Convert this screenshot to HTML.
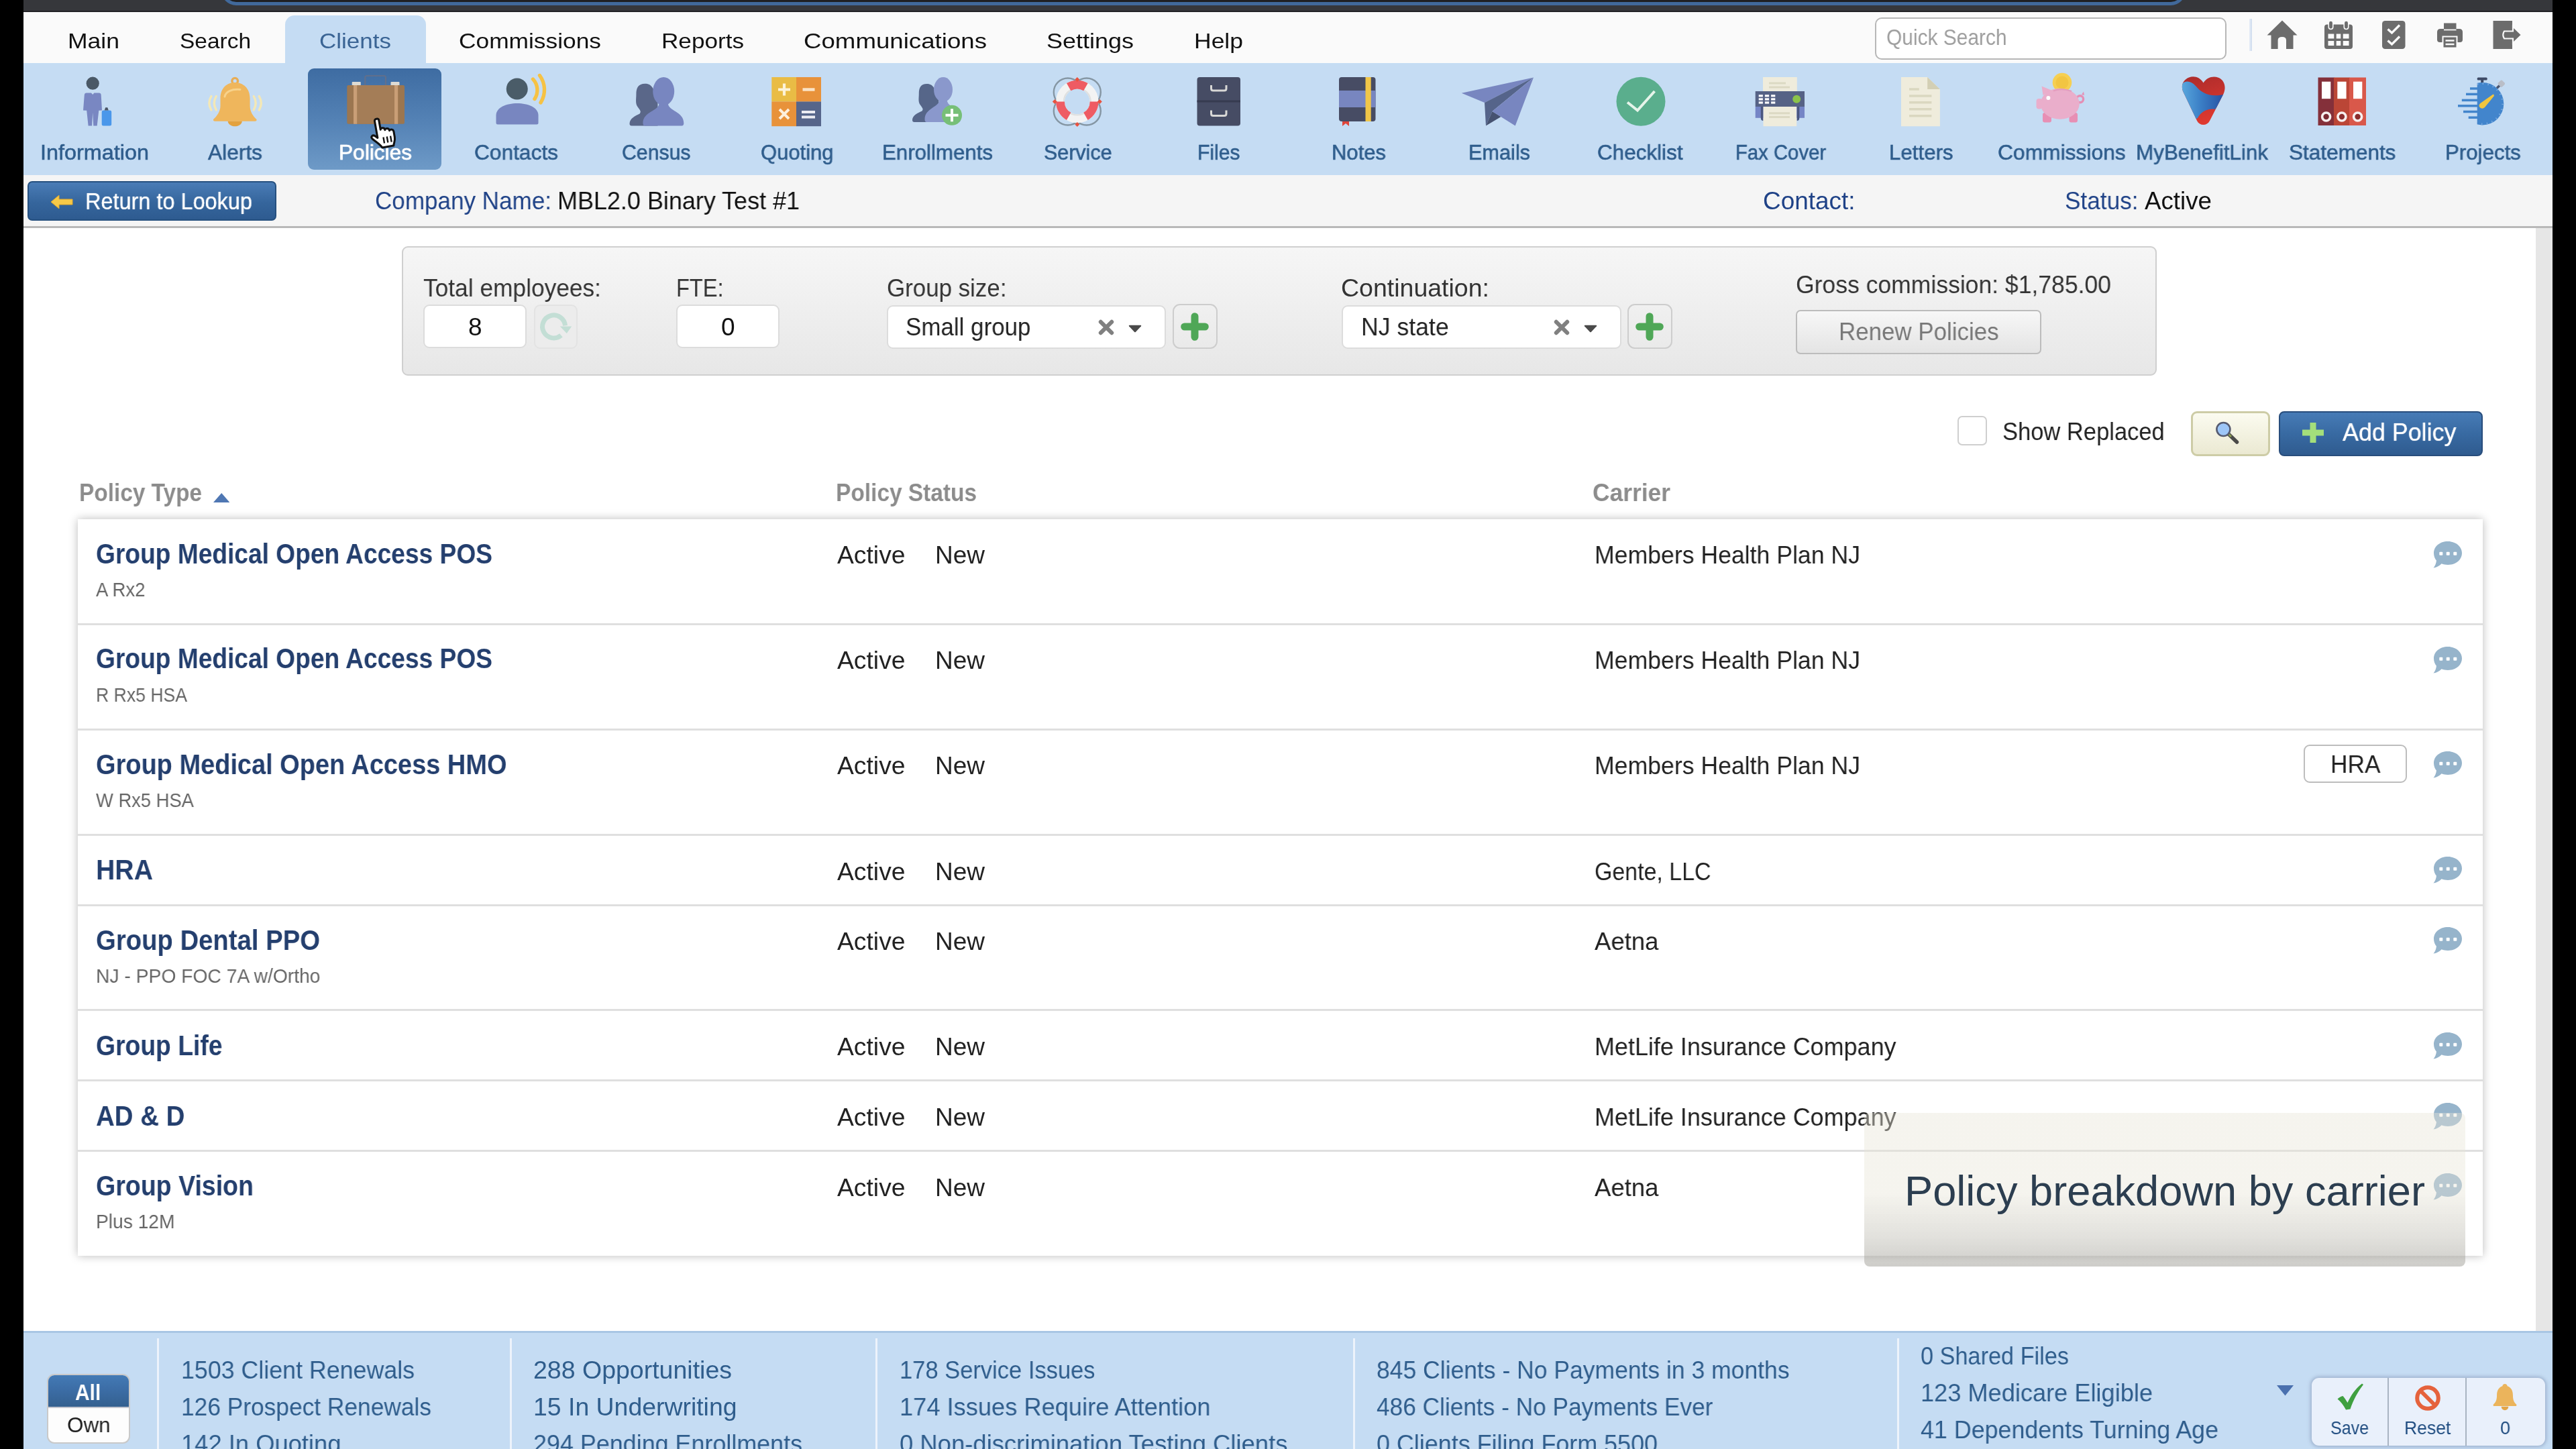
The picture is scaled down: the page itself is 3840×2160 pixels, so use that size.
<!DOCTYPE html>
<html lang="en"><head><meta charset="utf-8"><title>Policies - MBL2.0 Binary Test #1</title>
<style>
html,body{margin:0;padding:0;background:#000;}
body{width:3840px;height:2160px;overflow:hidden;position:relative;font-family:"Liberation Sans",sans-serif;}
#app{position:absolute;left:0;top:0;width:3840px;height:2160px;overflow:hidden;background:#000;}
#app div,#app span.t,#app svg{position:absolute;box-sizing:border-box;}
span.t{white-space:pre;line-height:1em;transform-origin:0 50%;display:block;will-change:transform;}
</style></head><body><div id="app"><div style="left:35px;top:0px;width:3770px;height:2160px;background:#fff;"></div>
<div style="left:35px;top:0px;width:3770px;height:18px;background:#36373b;border-bottom:2px solid #232326;"></div>
<div style="left:330px;top:-40px;width:2928px;height:48px;background:#1f2023;border:5.600px solid #41699b;border-radius:22px;"></div>
<div style="left:35px;top:18px;width:3770px;height:76px;background:#fafafa;"></div>
<div style="left:425px;top:23px;width:210px;height:75px;background:#c5dcf3;border-radius:14px 14px 0 0;"></div>
<div style="left:35px;top:94px;width:3770px;height:167px;background:#c5dcf3;"></div>
<div style="left:35px;top:261px;width:3770px;height:79px;background:#f5f5f5;border-bottom:3px solid #b9b9b9;"></div>
<div style="left:3779.5px;top:340px;width:25.5px;height:1644px;background:#e6e6e6;"></div>
<span class="t" style="left:101.0px;top:45.9px;font-size:31.8px;color:#111;transform:scaleX(1.1172);">Main</span>
<span class="t" style="left:268.0px;top:45.9px;font-size:31.8px;color:#111;transform:scaleX(1.0521);">Search</span>
<span class="t" style="left:476.0px;top:45.9px;font-size:31.8px;color:#3a6494;transform:scaleX(1.1008);">Clients</span>
<span class="t" style="left:684.0px;top:45.9px;font-size:31.8px;color:#111;transform:scaleX(1.1110);">Commissions</span>
<span class="t" style="left:986.0px;top:45.9px;font-size:31.8px;color:#111;transform:scaleX(1.1047);">Reports</span>
<span class="t" style="left:1198.0px;top:45.9px;font-size:31.8px;color:#111;transform:scaleX(1.1528);">Communications</span>
<span class="t" style="left:1560.0px;top:45.9px;font-size:31.8px;color:#111;transform:scaleX(1.1314);">Settings</span>
<span class="t" style="left:1780.0px;top:45.9px;font-size:31.8px;color:#111;transform:scaleX(1.1161);">Help</span>
<div style="left:2794.5px;top:26px;width:524px;height:63px;background:#fff;border:2.800px solid #b7b7b7;border-radius:10px;"></div>
<span class="t" style="left:2812.0px;top:39.4px;font-size:33.5px;color:#9f9f9f;transform:scaleX(0.8926);">Quick Search</span>
<div style="left:3353px;top:28px;width:3.5px;height:48px;background:linear-gradient(90deg,#e6edf7,#cfdcee);"></div>
<div style="left:459px;top:102px;width:199px;height:151px;background:linear-gradient(180deg,#3e6ca2 0%,#5583b6 55%,#6e9ac7 100%);border-radius:9px;"></div>
<span class="t" style="left:59.9px;top:210.9px;font-size:32px;color:#2f5d8c;transform:scaleX(1.0120);-webkit-text-stroke:.6px #2f5d8c;">Information</span>
<span class="t" style="left:309.9px;top:210.9px;font-size:32px;color:#2f5d8c;transform:scaleX(0.9903);-webkit-text-stroke:.6px #2f5d8c;">Alerts</span>
<span class="t" style="left:505.3px;top:210.9px;font-size:32px;color:#fff;transform:scaleX(0.9885);text-shadow:0 0 1px #fff;-webkit-text-stroke:.5px #fff;">Policies</span>
<span class="t" style="left:706.7px;top:210.9px;font-size:32px;color:#2f5d8c;transform:scaleX(0.9899);-webkit-text-stroke:.6px #2f5d8c;">Contacts</span>
<span class="t" style="left:927.4px;top:210.9px;font-size:32px;color:#2f5d8c;transform:scaleX(0.9447);-webkit-text-stroke:.6px #2f5d8c;">Census</span>
<span class="t" style="left:1133.9px;top:210.9px;font-size:32px;color:#2f5d8c;transform:scaleX(0.9681);-webkit-text-stroke:.6px #2f5d8c;">Quoting</span>
<span class="t" style="left:1315.1px;top:210.9px;font-size:32px;color:#2f5d8c;transform:scaleX(0.9766);-webkit-text-stroke:.6px #2f5d8c;">Enrollments</span>
<span class="t" style="left:1556.2px;top:210.9px;font-size:32px;color:#2f5d8c;transform:scaleX(0.9512);-webkit-text-stroke:.6px #2f5d8c;">Service</span>
<span class="t" style="left:1784.7px;top:210.9px;font-size:32px;color:#2f5d8c;transform:scaleX(0.9399);-webkit-text-stroke:.6px #2f5d8c;">Files</span>
<span class="t" style="left:1985.4px;top:210.9px;font-size:32px;color:#2f5d8c;transform:scaleX(0.9690);-webkit-text-stroke:.6px #2f5d8c;">Notes</span>
<span class="t" style="left:2189.3px;top:210.9px;font-size:32px;color:#2f5d8c;transform:scaleX(0.9582);-webkit-text-stroke:.6px #2f5d8c;">Emails</span>
<span class="t" style="left:2381.0px;top:210.9px;font-size:32px;color:#2f5d8c;transform:scaleX(0.9822);-webkit-text-stroke:.6px #2f5d8c;">Checklist</span>
<span class="t" style="left:2586.7px;top:210.9px;font-size:32px;color:#2f5d8c;transform:scaleX(0.9147);-webkit-text-stroke:.6px #2f5d8c;">Fax Cover</span>
<span class="t" style="left:2815.8px;top:210.9px;font-size:32px;color:#2f5d8c;transform:scaleX(0.9772);-webkit-text-stroke:.6px #2f5d8c;">Letters</span>
<span class="t" style="left:2977.7px;top:210.9px;font-size:32px;color:#2f5d8c;transform:scaleX(0.9931);-webkit-text-stroke:.6px #2f5d8c;">Commissions</span>
<span class="t" style="left:3184.0px;top:210.9px;font-size:32px;color:#2f5d8c;transform:scaleX(0.9802);-webkit-text-stroke:.6px #2f5d8c;">MyBenefitLink</span>
<span class="t" style="left:3412.3px;top:210.9px;font-size:32px;color:#2f5d8c;transform:scaleX(0.9848);-webkit-text-stroke:.6px #2f5d8c;">Statements</span>
<span class="t" style="left:3645.0px;top:210.9px;font-size:32px;color:#2f5d8c;transform:scaleX(0.9758);-webkit-text-stroke:.6px #2f5d8c;">Projects</span>
<div style="left:41px;top:270px;width:371px;height:59px;background:linear-gradient(180deg,#4a7cb6,#35659c 55%,#2e5b90);border:2px solid #26507f;border-radius:7px;"></div>
<span class="t" style="left:127.0px;top:282.4px;font-size:35px;color:#fff;transform:scaleX(0.9273);text-shadow:0 0 1px #fff;">Return to Lookup</span>
<svg style="left:74px;top:288px;" width="38" height="26" viewBox="0 0 38 26"><path d="M2 13 L14 3 L14 9 L34 9 L34 17 L14 17 L14 23 Z" fill="#f7c948" stroke="#e0a82a" stroke-width="1"/></svg>
<span class="t" style="left:559.0px;top:282.1px;font-size:36.5px;color:#1f4287;transform:scaleX(0.9603);">Company Name:</span>
<span class="t" style="left:831.0px;top:282.1px;font-size:36.5px;color:#111;transform:scaleX(0.9848);">MBL2.0 Binary Test #1</span>
<span class="t" style="left:2627.5px;top:282.1px;font-size:36.5px;color:#1f4287;transform:scaleX(1.0115);">Contact:</span>
<span class="t" style="left:3077.5px;top:282.1px;font-size:36.5px;color:#1f4287;transform:scaleX(0.9637);">Status:</span>
<span class="t" style="left:3196.7px;top:282.1px;font-size:36.5px;color:#111;transform:scaleX(1.0060);">Active</span>
<div style="left:599px;top:367px;width:2616px;height:193px;background:linear-gradient(180deg,#f6f6f6,#e7e7e7);border:2px solid #cfcfcf;border-radius:9px;"></div>
<span class="t" style="left:631.0px;top:411.2px;font-size:37px;color:#333;transform:scaleX(0.9544);">Total employees:</span>
<span class="t" style="left:1008.0px;top:411.2px;font-size:37px;color:#333;transform:scaleX(0.8794);">FTE:</span>
<span class="t" style="left:1321.5px;top:411.2px;font-size:37px;color:#333;transform:scaleX(0.9434);">Group size:</span>
<span class="t" style="left:1999.0px;top:411.2px;font-size:37px;color:#333;transform:scaleX(1.0135);">Continuation:</span>
<span class="t" style="left:2677.0px;top:405.7px;font-size:37px;color:#333;transform:scaleX(0.9603);">Gross commission: $1,785.00</span>
<div style="left:631px;top:454px;width:154px;height:65px;background:#fff;border:2px solid #dcdcdc;border-radius:9px;"></div>
<span class="t" style="left:697.7px;top:468.7px;font-size:37px;color:#111;">8</span>
<div style="left:796px;top:454px;width:65px;height:65.5px;background:#ececec;border:2px solid #e3e3e3;border-radius:9px;"></div>
<svg style="left:796px;top:454px;" width="66" height="66" viewBox="0 0 66 66"><path d="M40.5 45.9 A17 17 0 1 1 46.5 31.4" fill="none" stroke="#c3ded5" stroke-width="7"/><path d="M38.8 32.6 L56.2 32.6 L48.8 43 Z" fill="#c3ded5"/></svg>
<div style="left:1008px;top:454px;width:154px;height:65px;background:#fff;border:2px solid #dcdcdc;border-radius:9px;"></div>
<span class="t" style="left:1074.7px;top:468.7px;font-size:37px;color:#111;">0</span>
<div style="left:1321.5px;top:454.5px;width:416.5px;height:65px;background:#fff;border:2px solid #dcdcdc;border-radius:9px;"></div>
<span class="t" style="left:1350.0px;top:468.7px;font-size:37px;color:#222;transform:scaleX(0.9446);">Small group</span>
<svg style="left:1636.2px;top:474.8px;" width="26" height="26" viewBox="0 0 26 26"><path d="M4.800 4.800 L21.200 21.200 M21.200 4.800 L4.800 21.200" stroke="#808080" stroke-width="6" stroke-linecap="round"/></svg>
<svg style="left:1682.2px;top:483.800px;" width="20" height="12" viewBox="0 0 20 12"><path d="M1.500 0.800 L18.500 0.800 Q19.800 1.200 19 2.300 L10.800 11 Q10 11.600 9.200 11 L1 2.300 Q0.200 1.200 1.500 0.800 Z" fill="#4a4a4a"/></svg>
<div style="left:2000px;top:454.5px;width:416.5px;height:65px;background:#fff;border:2px solid #dcdcdc;border-radius:9px;"></div>
<span class="t" style="left:2028.5px;top:468.7px;font-size:37px;color:#222;transform:scaleX(0.9630);">NJ state</span>
<svg style="left:2314.7px;top:474.8px;" width="26" height="26" viewBox="0 0 26 26"><path d="M4.800 4.800 L21.200 21.200 M21.200 4.800 L4.800 21.200" stroke="#808080" stroke-width="6" stroke-linecap="round"/></svg>
<svg style="left:2360.7px;top:483.800px;" width="20" height="12" viewBox="0 0 20 12"><path d="M1.500 0.800 L18.500 0.800 Q19.800 1.200 19 2.300 L10.800 11 Q10 11.600 9.200 11 L1 2.300 Q0.200 1.200 1.500 0.800 Z" fill="#4a4a4a"/></svg>
<div style="left:1747.8px;top:453px;width:67px;height:67px;background:linear-gradient(180deg,#f0f0f0,#eaeaea);border:2.500px solid #cdcdcd;border-radius:11px;"></div>
<svg style="left:1758.3px;top:463.5px;" width="46" height="46" viewBox="0 0 46 46"><path d="M23 7.700 V38.300 M7.700 23 H38.300" stroke="#4fa757" stroke-width="11" stroke-linecap="round"/></svg>
<div style="left:2425.5px;top:453px;width:67px;height:67px;background:linear-gradient(180deg,#f0f0f0,#eaeaea);border:2.500px solid #cdcdcd;border-radius:11px;"></div>
<svg style="left:2436px;top:463.5px;" width="46" height="46" viewBox="0 0 46 46"><path d="M23 7.700 V38.300 M7.700 23 H38.300" stroke="#4fa757" stroke-width="11" stroke-linecap="round"/></svg>
<div style="left:2677px;top:462px;width:366px;height:66px;background:linear-gradient(180deg,#f7f7f7,#e4e4e4);border:2px solid #bcbcbc;border-radius:7px;"></div>
<span class="t" style="left:2741.0px;top:476.5px;font-size:36px;color:#777;transform:scaleX(0.9698);">Renew Policies</span>
<div style="left:2918px;top:620px;width:44px;height:44px;background:#fff;border:2px solid #cfcfcf;border-radius:7px;"></div>
<span class="t" style="left:2985.0px;top:625.4px;font-size:37px;color:#222;transform:scaleX(0.9326);">Show Replaced</span>
<div style="left:3266px;top:612.5px;width:117.5px;height:67.5px;background:linear-gradient(180deg,#fbfbf0,#ebe9d2);border:3px solid #cdcca6;border-radius:9px;"></div>
<svg style="left:3298px;top:624px;" width="44" height="44" viewBox="0 0 44 44"><path d="M24 23 L36.5 35" stroke="#4a4a48" stroke-width="5.5" stroke-linecap="round"/><path d="M22 21 L28 27" stroke="#8a9a50" stroke-width="3"/><circle cx="16.4" cy="16" r="10" fill="#9dc6f7" stroke="#565b70" stroke-width="2.6"/></svg>
<div style="left:3397px;top:612.5px;width:304px;height:67.5px;background:linear-gradient(180deg,#477bb6,#386aa2 50%,#2f5b8f);border:2px solid #284d7c;border-radius:8px;"></div>
<svg style="left:3432px;top:630px;" width="32" height="30" viewBox="0 0 32 30"><path d="M11.5 0 H20.5 V10.5 H32 V19.5 H20.5 V30 H11.5 V19.5 H0 V10.5 H11.5 Z" fill="#a4df7b"/></svg>
<span class="t" style="left:3491.5px;top:625.7px;font-size:37px;color:#fff;transform:scaleX(0.9696);text-shadow:0 0 1px #fff;">Add Policy</span>
<span class="t" style="left:118.0px;top:716.4px;font-size:37.3px;color:#8c8c8c;font-weight:700;transform:scaleX(0.8948);">Policy Type</span>
<svg style="left:317.5px;top:734.5px;" width="24.500" height="14" viewBox="0 0 24 13" preserveAspectRatio="none"><path d="M0 13 L12 0 L24 13 Z" fill="#4f77b3"/></svg>
<span class="t" style="left:1246.0px;top:716.4px;font-size:37.3px;color:#8c8c8c;font-weight:700;transform:scaleX(0.8966);">Policy Status</span>
<span class="t" style="left:2374.0px;top:716.4px;font-size:37.3px;color:#8c8c8c;font-weight:700;transform:scaleX(0.9483);">Carrier</span>
<div style="left:116px;top:774.3px;width:3585px;height:1098px;background:#fff;box-shadow:0 0 13px 0 rgba(0,0,0,.27);"></div>
<span class="t" style="left:143.0px;top:804.5px;font-size:42px;color:#243f6e;font-weight:700;transform:scaleX(0.8843);">Group Medical Open Access POS</span>
<span class="t" style="left:142.5px;top:865.2px;font-size:29px;color:#666;transform:scaleX(0.9499);">A Rx2</span>
<span class="t" style="left:1247.5px;top:809.0px;font-size:37px;color:#222;transform:scaleX(1.0073);">Active</span>
<span class="t" style="left:1393.5px;top:809.0px;font-size:37px;color:#222;">New</span>
<span class="t" style="left:2376.5px;top:809.0px;font-size:37px;color:#222;transform:scaleX(0.9629);">Members Health Plan NJ</span>
<svg style="left:3625px;top:806px;" width="46" height="42" viewBox="0 0 46 42"><path d="M24 1 C36 1 45 8.6 45 18.5 C45 28.4 36 36 24 36 C20.6 36 17.4 35.4 14.6 34.3 C11.5 37.5 7.5 39.8 2.5 40.6 C5.2 37.4 6.6 33.6 6.9 29.6 C4.4 26.5 3 22.7 3 18.5 C3 8.6 12 1 24 1 Z" fill="#96b4cb"/><rect x="11.3" y="16.8" width="5" height="5" rx="1" fill="#fff"/><rect x="21.7" y="16.8" width="5" height="5" rx="1" fill="#fff"/><rect x="32.3" y="16.8" width="5" height="5" rx="1" fill="#fff"/></svg>
<div style="left:116px;top:929.2px;width:3585px;height:3px;background:#dfdfdf;"></div>
<span class="t" style="left:143.0px;top:961.2px;font-size:42px;color:#243f6e;font-weight:700;transform:scaleX(0.8843);">Group Medical Open Access POS</span>
<span class="t" style="left:142.5px;top:1021.9px;font-size:29px;color:#666;transform:scaleX(0.9173);">R Rx5 HSA</span>
<span class="t" style="left:1247.5px;top:965.7px;font-size:37px;color:#222;transform:scaleX(1.0073);">Active</span>
<span class="t" style="left:1393.5px;top:965.7px;font-size:37px;color:#222;">New</span>
<span class="t" style="left:2376.5px;top:965.7px;font-size:37px;color:#222;transform:scaleX(0.9629);">Members Health Plan NJ</span>
<svg style="left:3625px;top:962.7px;" width="46" height="42" viewBox="0 0 46 42"><path d="M24 1 C36 1 45 8.6 45 18.5 C45 28.4 36 36 24 36 C20.6 36 17.4 35.4 14.6 34.3 C11.5 37.5 7.5 39.8 2.5 40.6 C5.2 37.4 6.6 33.6 6.9 29.6 C4.4 26.5 3 22.7 3 18.5 C3 8.6 12 1 24 1 Z" fill="#96b4cb"/><rect x="11.3" y="16.8" width="5" height="5" rx="1" fill="#fff"/><rect x="21.7" y="16.8" width="5" height="5" rx="1" fill="#fff"/><rect x="32.3" y="16.8" width="5" height="5" rx="1" fill="#fff"/></svg>
<div style="left:116px;top:1085.9px;width:3585px;height:3px;background:#dfdfdf;"></div>
<span class="t" style="left:143.0px;top:1118.6px;font-size:42px;color:#243f6e;font-weight:700;transform:scaleX(0.9039);">Group Medical Open Access HMO</span>
<span class="t" style="left:142.5px;top:1178.9px;font-size:29px;color:#666;transform:scaleX(0.9438);">W Rx5 HSA</span>
<span class="t" style="left:1247.5px;top:1123.1px;font-size:37px;color:#222;transform:scaleX(1.0073);">Active</span>
<span class="t" style="left:1393.5px;top:1123.1px;font-size:37px;color:#222;">New</span>
<span class="t" style="left:2376.5px;top:1123.1px;font-size:37px;color:#222;transform:scaleX(0.9629);">Members Health Plan NJ</span>
<svg style="left:3625px;top:1119.4px;" width="46" height="42" viewBox="0 0 46 42"><path d="M24 1 C36 1 45 8.6 45 18.5 C45 28.4 36 36 24 36 C20.6 36 17.4 35.4 14.6 34.3 C11.5 37.5 7.5 39.8 2.5 40.6 C5.2 37.4 6.6 33.6 6.9 29.6 C4.4 26.5 3 22.7 3 18.5 C3 8.6 12 1 24 1 Z" fill="#96b4cb"/><rect x="11.3" y="16.8" width="5" height="5" rx="1" fill="#fff"/><rect x="21.7" y="16.8" width="5" height="5" rx="1" fill="#fff"/><rect x="32.3" y="16.8" width="5" height="5" rx="1" fill="#fff"/></svg>
<div style="left:3434px;top:1110.4px;width:154px;height:56.5px;background:#fff;border:2px solid #bdbdbd;border-radius:9px;"></div>
<span class="t" style="left:3474.0px;top:1121.1px;font-size:37px;color:#222;transform:scaleX(0.9536);">HRA</span>
<div style="left:116px;top:1242.6px;width:3585px;height:3px;background:#dfdfdf;"></div>
<span class="t" style="left:143.0px;top:1276.0px;font-size:42px;color:#243f6e;font-weight:700;transform:scaleX(0.9341);">HRA</span>
<span class="t" style="left:1247.5px;top:1280.5px;font-size:37px;color:#222;transform:scaleX(1.0073);">Active</span>
<span class="t" style="left:1393.5px;top:1280.5px;font-size:37px;color:#222;">New</span>
<span class="t" style="left:2376.5px;top:1280.5px;font-size:37px;color:#222;transform:scaleX(0.9169);">Gente, LLC</span>
<svg style="left:3625px;top:1276.1px;" width="46" height="42" viewBox="0 0 46 42"><path d="M24 1 C36 1 45 8.6 45 18.5 C45 28.4 36 36 24 36 C20.6 36 17.4 35.4 14.6 34.3 C11.5 37.5 7.5 39.8 2.5 40.6 C5.2 37.4 6.6 33.6 6.9 29.6 C4.4 26.5 3 22.7 3 18.5 C3 8.6 12 1 24 1 Z" fill="#96b4cb"/><rect x="11.3" y="16.8" width="5" height="5" rx="1" fill="#fff"/><rect x="21.7" y="16.8" width="5" height="5" rx="1" fill="#fff"/><rect x="32.3" y="16.8" width="5" height="5" rx="1" fill="#fff"/></svg>
<div style="left:116px;top:1347.5px;width:3585px;height:3px;background:#dfdfdf;"></div>
<span class="t" style="left:143.0px;top:1380.9px;font-size:42px;color:#243f6e;font-weight:700;transform:scaleX(0.9116);">Group Dental PPO</span>
<span class="t" style="left:142.5px;top:1440.9px;font-size:29px;color:#666;transform:scaleX(0.9745);">NJ - PPO FOC 7A w/Ortho</span>
<span class="t" style="left:1247.5px;top:1385.4px;font-size:37px;color:#222;transform:scaleX(1.0073);">Active</span>
<span class="t" style="left:1393.5px;top:1385.4px;font-size:37px;color:#222;">New</span>
<span class="t" style="left:2376.5px;top:1385.4px;font-size:37px;color:#222;transform:scaleX(0.9876);">Aetna</span>
<svg style="left:3625px;top:1381px;" width="46" height="42" viewBox="0 0 46 42"><path d="M24 1 C36 1 45 8.6 45 18.5 C45 28.4 36 36 24 36 C20.6 36 17.4 35.4 14.6 34.3 C11.5 37.5 7.5 39.8 2.5 40.6 C5.2 37.4 6.6 33.6 6.9 29.6 C4.4 26.5 3 22.7 3 18.5 C3 8.6 12 1 24 1 Z" fill="#96b4cb"/><rect x="11.3" y="16.8" width="5" height="5" rx="1" fill="#fff"/><rect x="21.7" y="16.8" width="5" height="5" rx="1" fill="#fff"/><rect x="32.3" y="16.8" width="5" height="5" rx="1" fill="#fff"/></svg>
<div style="left:116px;top:1504.2px;width:3585px;height:3px;background:#dfdfdf;"></div>
<span class="t" style="left:143.0px;top:1537.6px;font-size:42px;color:#243f6e;font-weight:700;transform:scaleX(0.8878);">Group Life</span>
<span class="t" style="left:1247.5px;top:1542.1px;font-size:37px;color:#222;transform:scaleX(1.0073);">Active</span>
<span class="t" style="left:1393.5px;top:1542.1px;font-size:37px;color:#222;">New</span>
<span class="t" style="left:2376.5px;top:1542.1px;font-size:37px;color:#222;transform:scaleX(0.9714);">MetLife Insurance Company</span>
<svg style="left:3625px;top:1537.7px;" width="46" height="42" viewBox="0 0 46 42"><path d="M24 1 C36 1 45 8.6 45 18.5 C45 28.4 36 36 24 36 C20.6 36 17.4 35.4 14.6 34.3 C11.5 37.5 7.5 39.8 2.5 40.6 C5.2 37.4 6.6 33.6 6.9 29.6 C4.4 26.5 3 22.7 3 18.5 C3 8.6 12 1 24 1 Z" fill="#96b4cb"/><rect x="11.3" y="16.8" width="5" height="5" rx="1" fill="#fff"/><rect x="21.7" y="16.8" width="5" height="5" rx="1" fill="#fff"/><rect x="32.3" y="16.8" width="5" height="5" rx="1" fill="#fff"/></svg>
<div style="left:116px;top:1609.1px;width:3585px;height:3px;background:#dfdfdf;"></div>
<span class="t" style="left:143.0px;top:1642.5px;font-size:42px;color:#243f6e;font-weight:700;transform:scaleX(0.9159);">AD &amp; D</span>
<span class="t" style="left:1247.5px;top:1647.0px;font-size:37px;color:#222;transform:scaleX(1.0073);">Active</span>
<span class="t" style="left:1393.5px;top:1647.0px;font-size:37px;color:#222;">New</span>
<span class="t" style="left:2376.5px;top:1647.0px;font-size:37px;color:#222;transform:scaleX(0.9714);">MetLife Insurance Company</span>
<svg style="left:3625px;top:1642.6px;" width="46" height="42" viewBox="0 0 46 42"><path d="M24 1 C36 1 45 8.6 45 18.5 C45 28.4 36 36 24 36 C20.6 36 17.4 35.4 14.6 34.3 C11.5 37.5 7.5 39.8 2.5 40.6 C5.2 37.4 6.6 33.6 6.9 29.6 C4.4 26.5 3 22.7 3 18.5 C3 8.6 12 1 24 1 Z" fill="#96b4cb"/><rect x="11.3" y="16.8" width="5" height="5" rx="1" fill="#fff"/><rect x="21.7" y="16.8" width="5" height="5" rx="1" fill="#fff"/><rect x="32.3" y="16.8" width="5" height="5" rx="1" fill="#fff"/></svg>
<div style="left:116px;top:1714px;width:3585px;height:3px;background:#dfdfdf;"></div>
<span class="t" style="left:143.0px;top:1747.4px;font-size:42px;color:#243f6e;font-weight:700;transform:scaleX(0.8938);">Group Vision</span>
<span class="t" style="left:142.5px;top:1807.4px;font-size:29px;color:#666;transform:scaleX(0.9720);">Plus 12M</span>
<span class="t" style="left:1247.5px;top:1751.9px;font-size:37px;color:#222;transform:scaleX(1.0073);">Active</span>
<span class="t" style="left:1393.5px;top:1751.9px;font-size:37px;color:#222;">New</span>
<span class="t" style="left:2376.5px;top:1751.9px;font-size:37px;color:#222;transform:scaleX(0.9876);">Aetna</span>
<svg style="left:3625px;top:1747.5px;" width="46" height="42" viewBox="0 0 46 42"><path d="M24 1 C36 1 45 8.6 45 18.5 C45 28.4 36 36 24 36 C20.6 36 17.4 35.4 14.6 34.3 C11.5 37.5 7.5 39.8 2.5 40.6 C5.2 37.4 6.6 33.6 6.9 29.6 C4.4 26.5 3 22.7 3 18.5 C3 8.6 12 1 24 1 Z" fill="#96b4cb"/><rect x="11.3" y="16.8" width="5" height="5" rx="1" fill="#fff"/><rect x="21.7" y="16.8" width="5" height="5" rx="1" fill="#fff"/><rect x="32.3" y="16.8" width="5" height="5" rx="1" fill="#fff"/></svg>
<div style="left:35px;top:1984px;width:3770px;height:176px;background:#c5dcf3;border-top:3px solid #a9c6e4;"></div>
<div style="left:233.5px;top:1995px;width:3px;height:170px;background:#edf3fb;"></div>
<div style="left:760px;top:1995px;width:3px;height:170px;background:#edf3fb;"></div>
<div style="left:1305px;top:1995px;width:3px;height:170px;background:#edf3fb;"></div>
<div style="left:2016.5px;top:1995px;width:3px;height:170px;background:#edf3fb;"></div>
<div style="left:2828.2px;top:1995px;width:3px;height:170px;background:#edf3fb;"></div>
<div style="left:70.3px;top:2047.8px;width:123.7px;height:104px;background:#fdfdfd;border:2.500px solid #c9c9c9;border-radius:11px;overflow:hidden;"><div style="left:0;top:0;width:120px;height:47px;background:linear-gradient(180deg,#437ab5,#3c6da6 45%,#34608f);border-bottom:2px solid #c3c6cf;box-sizing:content-box;"></div></div>
<span class="t" style="left:112.2px;top:2058.7px;font-size:33px;color:#fff;font-weight:700;transform:scaleX(0.9082);">All</span>
<span class="t" style="left:99.5px;top:2109.2px;font-size:31.7px;color:#222;transform:scaleX(0.9915);">Own</span>
<span class="t" style="left:270.0px;top:2023.7px;font-size:37px;color:#2f5d8c;transform:scaleX(0.9668);">1503 Client Renewals</span>
<span class="t" style="left:270.0px;top:2078.7px;font-size:37px;color:#2f5d8c;transform:scaleX(0.9545);">126 Prospect Renewals</span>
<span class="t" style="left:270.0px;top:2133.7px;font-size:37px;color:#2f5d8c;transform:scaleX(0.9825);">142 In Quoting</span>
<span class="t" style="left:795.0px;top:2023.7px;font-size:37px;color:#2f5d8c;transform:scaleX(1.0134);">288 Opportunities</span>
<span class="t" style="left:795.0px;top:2078.7px;font-size:37px;color:#2f5d8c;transform:scaleX(1.0108);">15 In Underwriting</span>
<span class="t" style="left:795.0px;top:2133.7px;font-size:37px;color:#2f5d8c;transform:scaleX(0.9699);">294 Pending Enrollments</span>
<span class="t" style="left:1340.5px;top:2023.7px;font-size:37px;color:#2f5d8c;transform:scaleX(0.9325);">178 Service Issues</span>
<span class="t" style="left:1340.5px;top:2078.7px;font-size:37px;color:#2f5d8c;transform:scaleX(0.9797);">174 Issues Require Attention</span>
<span class="t" style="left:1340.5px;top:2133.7px;font-size:37px;color:#2f5d8c;transform:scaleX(0.9847);">0 Non-discrimination Testing Clients</span>
<span class="t" style="left:2051.5px;top:2023.7px;font-size:37px;color:#2f5d8c;transform:scaleX(0.9593);">845 Clients - No Payments in 3 months</span>
<span class="t" style="left:2051.5px;top:2078.7px;font-size:37px;color:#2f5d8c;transform:scaleX(0.9526);">486 Clients - No Payments Ever</span>
<span class="t" style="left:2051.5px;top:2133.7px;font-size:37px;color:#2f5d8c;transform:scaleX(0.9703);">0 Clients Filing Form 5500</span>
<span class="t" style="left:2863.0px;top:2003.3px;font-size:37px;color:#2f5d8c;transform:scaleX(0.9263);">0 Shared Files</span>
<span class="t" style="left:2863.0px;top:2058.3px;font-size:37px;color:#2f5d8c;transform:scaleX(0.9780);">123 Medicare Eligible</span>
<span class="t" style="left:2863.0px;top:2113.3px;font-size:37px;color:#2f5d8c;transform:scaleX(0.9678);">41 Dependents Turning Age</span>
<svg style="left:3393.500px;top:2065px;" width="25" height="15.500" viewBox="0 0 26 13" preserveAspectRatio="none"><path d="M0 0 L26 0 L13 13 Z" fill="#4a70ae"/></svg>
<div style="left:3446px;top:2054px;width:347.5px;height:101px;background:#e9f0fb;border-radius:11px;box-shadow:0 0 5px 2px rgba(150,170,200,.85);"></div>
<div style="left:3559.2px;top:2054px;width:2px;height:101px;background:#a9b4c2;"></div>
<div style="left:3674.5px;top:2054px;width:2px;height:101px;background:#a9b4c2;"></div>
<span class="t" style="left:3474.4px;top:2113.9px;font-size:28.5px;color:#1f4c80;transform:scaleX(0.8804);">Save</span>
<span class="t" style="left:3583.9px;top:2113.9px;font-size:28.5px;color:#1f4c80;transform:scaleX(0.9308);">Reset</span>
<span class="t" style="left:3726.8px;top:2113.9px;font-size:28.5px;color:#1f4c80;transform:scaleX(0.9521);">0</span>
<svg style="left:3482px;top:2060px;" width="44" height="44" viewBox="0 0 44 44"><path d="M2.500 25.500 C5 23 8 21.500 10.500 21 C13 24 15.500 27.500 17.500 31 C22 21 29 10 39 2.500 L41 4 C33 14 26 27 21.500 40.500 L15 41.500 C11.500 35 7.500 29.500 2.500 25.500 Z" fill="#3fa040"/></svg>
<svg style="left:3598px;top:2063px;" width="42" height="42" viewBox="0 0 42 42"><circle cx="21" cy="21" r="15.800" fill="none" stroke="#e5623c" stroke-width="6"/><path d="M10 10 L32 32" stroke="#e5623c" stroke-width="6"/></svg>
<svg style="left:3713.500px;top:2060.500px;" width="40" height="44" viewBox="0 0 40 46"><path d="M20 2 C22.200 2 23.800 3.600 23.800 5.600 C30 7.500 32.500 13 32.500 20 C32.500 27 34.500 31 38 34 L38 36.500 L2 36.500 L2 34 C5.500 31 7.500 27 7.500 20 C7.500 13 10 7.500 16.200 5.600 C16.200 3.600 17.800 2 20 2 Z" fill="#ebb45c"/><path d="M14.500 37.500 H25.500 C25.500 41 23 43 20 43 C17 43 14.500 41 14.500 37.500Z" fill="#e3a548"/></svg>
<div style="left:2779px;top:1659px;width:896px;height:229px;background:linear-gradient(180deg,rgba(232,229,215,.42) 0%,rgba(232,229,215,.42) 52%,rgba(190,188,178,.44) 80%,rgba(150,148,140,.46) 100%);border-radius:8px;"></div>
<span class="t" style="left:2839.0px;top:1745.2px;font-size:62.4px;color:#2c3e50;transform:scaleX(1.0126);">Policy breakdown by carrier</span>
<svg style="left:35px;top:94px;" width="3770" height="167" viewBox="35 94 3770 167"><defs>
<linearGradient id="hb" x1="0" y1="0" x2="1" y2="0"><stop offset="0" stop-color="#5fb0e2"/><stop offset=".45" stop-color="#3b7fc6"/><stop offset="1" stop-color="#22479c"/></linearGradient>
<linearGradient id="hr" x1="0" y1="0" x2="0.3" y2="1"><stop offset="0" stop-color="#a52a2b"/><stop offset="1" stop-color="#e23a30"/></linearGradient>
<clipPath id="hc"><path d="M3284.5 123.5 C3280 115.5 3271 112.5 3263 115.5 C3254 119 3250.5 128 3254.5 137 L3275 180 C3279 188 3290 188 3294 180 L3314.5 140 C3319 130 3316 119.500 3307 115.800 C3299 112.500 3289.500 115.500 3284.500 123.500 Z"/></clipPath>
<clipPath id="sw"><rect x="3692.7" y="110" width="60" height="90"/></clipPath>
</defs><circle cx="138.2" cy="124.2" r="9.6" fill="#4a5866"/><path d="M129 138.500 L136 138.500 L138.200 141 L140.400 138.500 L147.500 138.500 Q150.500 138.500 150.700 141.500 L152 164.500 L147.300 164.800 L144.700 187.600 L139.300 187.600 L138.200 168 L137.100 187.600 L131.600 187.600 L129.200 164.800 L124 164.500 L125.800 141.500 Q126 138.500 129 138.500 Z" fill="#7987c2"/><rect x="151.700" y="164.600" width="14.500" height="23" rx="2.500" fill="#4a97ea"/><path d="M155.700 164.600 L157.200 160.300 L160.300 160.300 L161.800 164.600 Z" fill="#4a5566"/><circle cx="350.200" cy="120.700" r="4.300" fill="none" stroke="#e8ad55" stroke-width="3.400"/><path d="M339.700 180.500 H360.800 C360.800 185 356 188.300 350.200 188.300 C344.500 188.300 339.700 185 339.700 180.500Z" fill="#e3a23f"/><path d="M350.200 123 C362 123 372.600 131 372.600 147 L372.600 158 C372.600 166 377 173 382.500 178 Q383 180.800 380 180.800 L320.500 180.800 Q317.500 180.800 318 178 C323.500 173 328.500 166 328.500 158 L328.500 147 C328.500 131 338.500 123 350.200 123 Z" fill="#efb65c"/><path d="M335 144 C336.500 136.500 345 132.500 358 133.500" fill="none" stroke="#f7d28b" stroke-width="3" stroke-linecap="round"/><path d="M322.3 143.500 Q316.3 153.500 322.3 164" fill="none" stroke="#f4e8b6" stroke-width="3.400" stroke-linecap="round"/><path d="M314.9 143.500 Q308.9 153.500 314.9 164" fill="none" stroke="#f4e8b6" stroke-width="3.400" stroke-linecap="round"/><path d="M378.2 143.500 Q384.2 153.500 378.2 164" fill="none" stroke="#f4e8b6" stroke-width="3.400" stroke-linecap="round"/><path d="M386.3 143.500 Q392.3 153.500 386.3 164" fill="none" stroke="#f4e8b6" stroke-width="3.400" stroke-linecap="round"/><path d="M544.300 127 V115.500 Q544.300 113 546.800 113 H572.500 Q575 113 575 115.500 V127" fill="none" stroke="#7a6f78" stroke-width="2.200" opacity=".55"/><rect x="524.700" y="121.900" width="13.100" height="6" rx="1" fill="#dedbd3"/><rect x="582.500" y="121.900" width="13" height="6" rx="1" fill="#dedbd3"/><rect x="517.300" y="127" width="85.700" height="57.800" rx="2" fill="#9b7650"/><rect x="527" y="127" width="66.200" height="57.800" fill="#a47d57"/><rect x="527" y="127" width="5.200" height="57.800" fill="#c99e76"/><rect x="588" y="127" width="5.200" height="57.800" fill="#c99e76"/><circle cx="770.750" cy="132.500" r="16" fill="#4a5c68"/><path d="M739.500 183 L739.500 172 C739.500 160 755 154 771 154 C787 154 802.500 160 802.500 172 L802.500 183 Q802.500 185.500 800 185.500 L742 185.500 Q739.500 185.500 739.500 183Z" fill="#7886c0"/><path d="M794.500 118 A24 24 0 0 1 797 147.500" fill="none" stroke="#f6c244" stroke-width="5.400" stroke-linecap="round"/><path d="M804.500 112.500 A36 36 0 0 1 806 153" fill="none" stroke="#f6c244" stroke-width="5.400" stroke-linecap="round"/><path d="M961.45 124.8 C951.532 124.8 948.4 131.08 948.4 140.5 C948.4 148.664 946.834 153.688 950.488 159.34 C954.142 164.364 956.23 166.248 953.62 169.388 C947.095 172.528 938.5 176.296 938.5 184.6 Q938.5 187.6 941.5 187.6 L980.5 187.6 L980.5 149.92 C974.5 131.08 971.368 124.8 961.45 124.8 Z" fill="#5a6789"/><path d="M982.48 154.283 C982.48 165.276 958.4 166.276 958.4 183.6 Q958.4 187.6 961.4 187.6 L1016.3 187.6 Q1019.3 187.6 1019.3 183.6 C1019.3 166.276 995.92 165.276 995.92 154.283 Z" fill="#7886c0"/><ellipse cx="989.2" cy="136.12" rx="16" ry="21.12" fill="#7886c0"/><rect x="1150.300" y="115" width="36.900" height="36.600" fill="#e9bc45"/><rect x="1187" y="115" width="37" height="36.600" fill="#e8923a"/><rect x="1150.300" y="151.500" width="36.900" height="36.700" fill="#e8923a"/><rect x="1187" y="151.500" width="37" height="36.700" fill="#56658a"/><path d="M1169 124.500 V142.500 M1160 133.500 H1178" stroke="#fdf3d8" stroke-width="4.200"/><path d="M1196.500 133.500 H1214.500" stroke="#fbe3c6" stroke-width="4.500"/><path d="M1162 163 L1176 177 M1176 163 L1162 177" stroke="#fdf0dc" stroke-width="4"/><path d="M1195 167 H1215 M1195 174.500 H1215" stroke="#ebecf2" stroke-width="4"/><path d="M1381.6 125 C1372.63 125 1369.8 130.7 1369.8 139.25 C1369.8 146.66 1368.38 151.22 1371.69 156.35 C1374.99 160.91 1376.88 162.62 1374.52 165.47 C1368.62 168.32 1360 171.74 1360 179 Q1360 182 1363 182 L1399.4 182 L1399.4 147.8 C1393.4 130.7 1390.57 125 1381.6 125 Z" fill="#566689"/><path d="M1400.12 149.373 C1400.12 160.076 1378.5 161.076 1378.5 178 Q1378.5 182 1381.5 182 L1429 182 Q1432 182 1432 178 C1432 161.076 1411.88 160.076 1411.88 149.373 Z" fill="#8a98cc"/><ellipse cx="1406" cy="133.48" rx="14" ry="18.48" fill="#8a98cc"/><circle cx="1419" cy="171.800" r="15" fill="#77bf77"/><path d="M1419 162.300 V181.300 M1409.500 171.800 H1428.500" stroke="#fff" stroke-width="4"/><circle cx="1591.8" cy="137.5" r="21" fill="none" stroke="#8596a3" stroke-width="2.400"/><circle cx="1591.8" cy="165.5" r="21" fill="none" stroke="#8596a3" stroke-width="2.400"/><circle cx="1619.8" cy="137.5" r="21" fill="none" stroke="#8596a3" stroke-width="2.400"/><circle cx="1619.8" cy="165.5" r="21" fill="none" stroke="#8596a3" stroke-width="2.400"/><circle cx="1605.8" cy="151.5" r="25" fill="#c5dcf3"/><circle cx="1605.8" cy="151.5" r="25.300" fill="none" stroke="#f3f3f3" stroke-width="12.800"/><circle cx="1605.8" cy="151.5" r="20" fill="none" stroke="#dfe0e0" stroke-width="2.200"/><path d="M1589.95 124.05 A31.7 31.7 0 0 1 1621.65 124.05 L1615.25 135.13 A18.9 18.9 0 0 0 1596.35 135.13 Z" fill="#ee5b63"/><path d="M1637.50 151.50 A31.7 31.7 0 0 1 1621.65 178.95 L1615.25 167.87 A18.9 18.9 0 0 0 1624.70 151.50 Z" fill="#ee5b63"/><path d="M1589.95 178.95 A31.7 31.7 0 0 1 1574.10 151.50 L1586.90 151.50 A18.9 18.9 0 0 0 1596.35 167.87 Z" fill="#ee5b63"/><path d="M1605.8 115 l3.500 3.500 l-3.500 3.500 l-3.500 -3.500 Z" fill="#e8523f"/><path d="M1605.8 182 l3.500 3.500 l-3.500 3.500 l-3.500 -3.500 Z" fill="#e8523f"/><path d="M1572.3 148 l3.500 3.500 l-3.500 3.500 l-3.500 -3.500 Z" fill="#e8523f"/><path d="M1639.3 148 l3.500 3.500 l-3.500 3.500 l-3.500 -3.500 Z" fill="#e8523f"/><rect x="1784.500" y="115" width="64.500" height="72.500" rx="4" fill="#464c64"/><rect x="1784.500" y="149.500" width="64.500" height="3" fill="#363b50"/><path d="M1805.500 127 V132 Q1805.500 135 1808.500 135 H1825 Q1828 135 1828 132 V127" fill="none" stroke="#d8d8d6" stroke-width="3"/><path d="M1805.500 164.5 V169.5 Q1805.500 172.5 1808.500 172.5 H1825 Q1828 172.5 1828 169.5 V164.5" fill="none" stroke="#d8d8d6" stroke-width="3"/><rect x="2001" y="176" width="10" height="12" fill="#e0453a"/><path d="M2001 188 l5 -4 l5 4 Z" fill="#c5dcf3"/><rect x="1996" y="115" width="54.500" height="66" rx="4" fill="#474c64"/><rect x="1996" y="135" width="54.500" height="25" fill="#7886c0"/><rect x="2035.500" y="115" width="8.200" height="66" fill="#f1c648"/><path d="M2178.750 138.750 L2286 115.500 L2213 153 Z" fill="#7886c0"/><path d="M2213 153 L2286 115.500 L2224.500 166 L2215 187.500 Z" fill="#55648a"/><path d="M2224.500 166 L2215 187.500 L2237.500 174 Z" fill="#465270"/><path d="M2286 115.500 L2258.750 187.500 L2224.500 166 Z" fill="#7886c0"/><circle cx="2446" cy="151.250" r="36.500" fill="#5aae8d"/><path d="M2426 152.500 L2441 164.500 L2466.500 136" fill="none" stroke="#e6f4ea" stroke-width="4"/><rect x="2628" y="115" width="50.800" height="24" fill="#efecdc"/><path d="M2637 124 H2662 M2637 130 H2668" stroke="#dcd9c3" stroke-width="3"/><rect x="2616.700" y="159" width="73.300" height="16.800" fill="#7585c6"/><path d="M2624.800 159 h3.700 v21 q-3.700 0 -3.700 -4 Z M2682.300 159 h-3.700 v21 q3.700 0 3.700 -4 Z" fill="#4a5680"/><rect x="2628.500" y="159" width="49.700" height="29.200" fill="#efecdc"/><path d="M2637 168.700 H2668 M2637 174.500 H2668" stroke="#dcd9c3" stroke-width="3"/><rect x="2616.700" y="136" width="73.300" height="23" fill="#566285"/><circle cx="2678.200" cy="147.800" r="6" fill="#8bc34a"/><rect x="2621.7" y="141.2" width="6.200" height="3.200" fill="#fff"/><rect x="2630.9" y="141.2" width="6.200" height="3.200" fill="#fff"/><rect x="2640.1" y="141.2" width="6.200" height="3.200" fill="#fff"/><rect x="2621.7" y="146.3" width="6.200" height="3.200" fill="#fff"/><rect x="2630.9" y="146.3" width="6.200" height="3.200" fill="#fff"/><rect x="2640.1" y="146.3" width="6.200" height="3.200" fill="#fff"/><rect x="2621.7" y="151.4" width="6.200" height="3.200" fill="#fff"/><rect x="2630.9" y="151.4" width="6.200" height="3.200" fill="#fff"/><rect x="2640.1" y="151.4" width="6.200" height="3.200" fill="#fff"/><path d="M2834 115 H2873.200 L2891.900 133 V188.200 H2834 Z" fill="#efecdc"/><path d="M2873.200 115 L2891.900 133 H2873.200 Z" fill="#d3cfb4"/><path d="M2846 133 H2860.800 M2846 142.900 H2879.400 M2846 152.800 H2879.400 M2846 162.700 H2879.400 M2846 172.700 H2879.400" stroke="#dad7c0" stroke-width="3.500"/><circle cx="3074" cy="123" r="14.300" fill="#f6cf52"/><circle cx="3074" cy="123" r="9.500" fill="#f2c542"/><rect x="3045" y="168" width="13" height="14.600" rx="3" fill="#e78fb4"/><rect x="3084.500" y="168" width="12.500" height="14.600" rx="3" fill="#e78fb4"/><circle cx="3100.600" cy="147.800" r="5" fill="none" stroke="#e58fb5" stroke-width="3.400"/><path d="M3103 141 l3 -4.500 l1 5.500 Z" fill="#e58fb5"/><path d="M3045.500 142 L3043.500 128.600 L3058 134.500 Z" fill="#eaaecb"/><ellipse cx="3070.800" cy="154.700" rx="29" ry="23" fill="#eaaecb"/><rect x="3035.500" y="147" width="9" height="15.500" rx="4" fill="#eaaecb"/><path d="M3061 135.500 Q3074 131 3088 136" fill="none" stroke="#e39cbd" stroke-width="2"/><circle cx="3053.400" cy="146" r="3" fill="#fff"/><g clip-path="url(#hc)"><rect x="3245" y="108" width="80" height="85" fill="url(#hr)"/><path d="M3250 128 C3256 119 3266 120 3273 128 C3282 139 3294 145 3314 141 L3322 141 L3302 163 C3292 161 3281 166 3276 176 L3262 182 L3246 150 Z" fill="url(#hb)"/></g><rect x="3455.500" y="115.500" width="24" height="71.500" fill="#84303a"/><rect x="3479" y="115.500" width="23.500" height="71.500" fill="#bb4636"/><rect x="3502" y="115.500" width="25" height="71.500" fill="#d9584a"/><rect x="3461" y="121.700" width="13.300" height="25.500" fill="#fff"/><circle cx="3467.6" cy="174" r="6" fill="#7a2a33" stroke="#f7efee" stroke-width="3.600"/><rect x="3484.3" y="121.700" width="13.300" height="25.500" fill="#fff"/><circle cx="3490.9" cy="174" r="6" fill="#8c2f30" stroke="#f7efee" stroke-width="3.600"/><rect x="3508" y="121.700" width="13.300" height="25.500" fill="#fff"/><circle cx="3514.6" cy="174" r="6" fill="#8a2c2c" stroke="#f7efee" stroke-width="3.600"/><rect x="3692.700" y="115.500" width="15" height="4" rx="1.500" fill="#3d4a66"/><rect x="3698.200" y="118" width="4" height="6" fill="#3d4a66"/><path d="M3722 131.500 L3727 126.500" stroke="#4a5570" stroke-width="3.500"/><rect x="3724.500" y="120.500" width="8.500" height="8.500" rx="2" transform="rotate(45 3728.800 124.800)" fill="#b9bec8"/><g clip-path="url(#sw)"><circle cx="3700.500" cy="154.700" r="31.800" fill="#4285cc"/><circle cx="3700.500" cy="154.700" r="30.300" fill="none" stroke="#79aadf" stroke-width="3" stroke-dasharray="1.500 6.430"/></g><rect x="3682" y="130.25" width="11" height="3.500" fill="#4285cc"/><rect x="3676" y="138.65" width="17" height="3.500" fill="#4285cc"/><rect x="3669.8" y="147.65" width="23.2" height="3.500" fill="#4285cc"/><rect x="3664" y="156.05" width="29" height="3.500" fill="#4285cc"/><rect x="3672" y="164.75" width="21" height="3.500" fill="#4285cc"/><rect x="3679.7" y="173.45" width="13.3" height="3.500" fill="#4285cc"/><path d="M3716.500 140.500 Q3718.500 141 3717.500 143.500 L3704 160 Q3700 163.500 3696.500 160 Q3694 156.500 3698 153.500 Z" fill="#f2c53d"/></svg>
<svg style="left:545px;top:169.500px;" width="56" height="56" viewBox="-6 -4 52 52"><g transform="rotate(-10 18 22)"><path d="M9.500 4 C9.500 0.500 15.500 0.500 15.500 4 L15.500 17 C16 14.500 21.500 14.500 21.500 18.500 C22 16 27.500 16.500 27.500 20.500 C28 18.500 33 19 33 23 L33 30.500 C33 36 30.500 38 29.500 42 L13.500 42 C12 37.500 6 32.500 2 27.500 C0 24.500 3.500 21.500 6.500 24.500 L9.500 27.500 Z" fill="#fff" stroke="#111" stroke-width="2.800" stroke-linejoin="round"/><path d="M17.500 28 V36.500 M22.500 28 V36.500 M27.500 28 V36.500" stroke="#111" stroke-width="2.200"/></g></svg>
<svg style="left:3340px;top:20px;" width="440" height="70" viewBox="3340 20 440 70"><path d="M3402 30.500 L3424.500 52.500 L3418.500 52.500 L3418.500 73 L3408 73 L3408 60 Q3408 55 3402 55 Q3395.600 55 3395.600 60 L3395.600 73 L3385.500 73 L3385.500 52.500 L3379.500 52.500 Z" fill="#6c6c6c"/><path d="M3469 36.500 H3503 Q3507 36.500 3507 40.500 V69 Q3507 73 3503 73 H3469 Q3465 73 3465 69 V40.500 Q3465 36.500 3469 36.500 Z" fill="#6c6c6c"/><rect x="3470.500" y="50.500" width="31" height="17.500" fill="#fafafa"/><path d="M3481 50 V68.500 M3491 50 V68.500 M3470 59.300 H3502" stroke="#6c6c6c" stroke-width="3.400"/><rect x="3471.25" y="31" width="6.500" height="12.500" rx="3.200" fill="#6c6c6c" stroke="#fafafa" stroke-width="1.600"/><rect x="3494.25" y="31" width="6.500" height="12.500" rx="3.200" fill="#6c6c6c" stroke="#fafafa" stroke-width="1.600"/><rect x="3551" y="31" width="34.500" height="42" rx="4.500" fill="#6c6c6c"/><path d="M3559.500 43.500 L3565.500 49 L3577 37.500 M3559.500 60.500 L3565.500 66 L3577 54.500" fill="none" stroke="#fafafa" stroke-width="3.400"/><rect x="3643" y="34.500" width="18.500" height="10" fill="#6c6c6c"/><path d="M3638 43 H3666 Q3671 43 3671 48 V59 Q3671 63 3667 63 H3637 Q3633 63 3633 59 V48 Q3633 43 3638 43 Z" fill="#6c6c6c"/><rect x="3641.500" y="54.500" width="21" height="17" fill="#6c6c6c" stroke="#fafafa" stroke-width="2"/><path d="M3645.500 60.500 H3658.500 M3645.500 66 H3658.500" stroke="#fafafa" stroke-width="2.400"/><path d="M3643 44.500 H3661.500" stroke="#fafafa" stroke-width="1.800"/><rect x="3716.500" y="31" width="28.500" height="42" fill="#6c6c6c"/><path d="M3733 46.500 H3746 V39.500 L3759 52 L3746 64.500 V57.500 H3733 Q3729.500 52 3733 46.500 Z" fill="#6c6c6c" stroke="#fafafa" stroke-width="2.200"/></svg>
</div></body></html>
